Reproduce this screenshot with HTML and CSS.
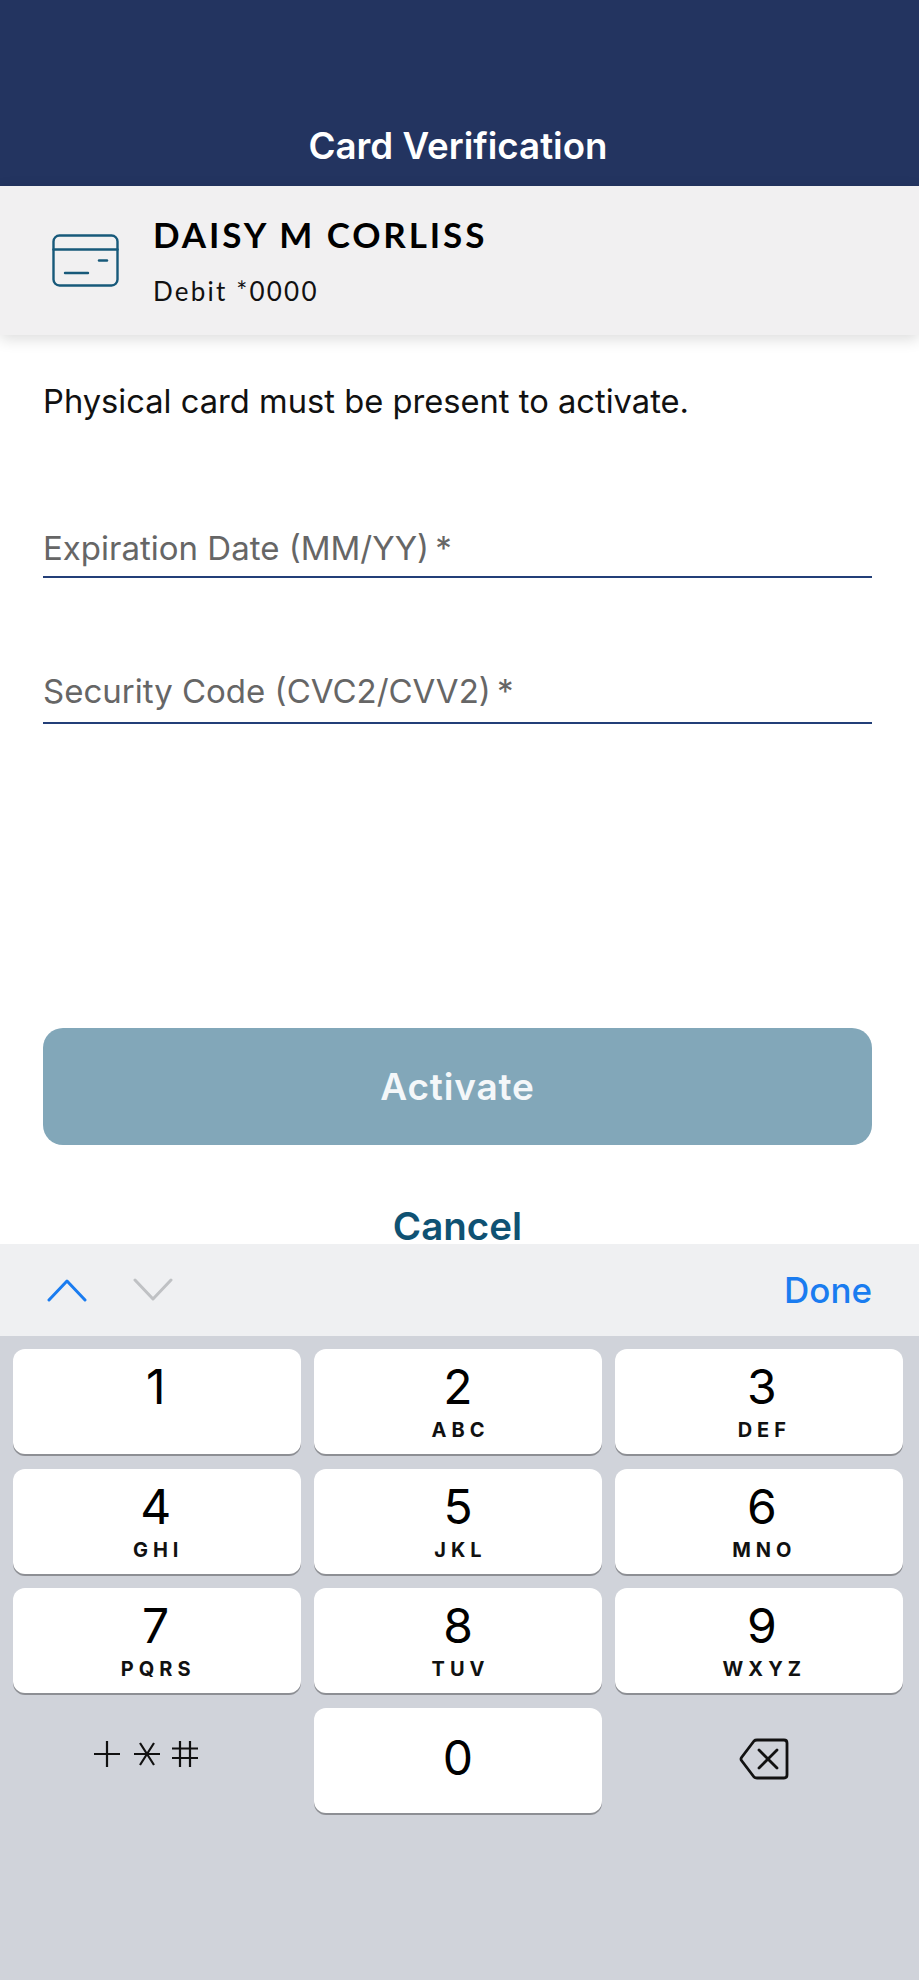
FILE: index.html
```html
<!DOCTYPE html>
<html lang="en">
  <head>
    <meta charset="UTF-8" />
    <meta name="viewport" content="width=device-width, initial-scale=1.0" />
    <title>Card Verification</title>
    <link rel="stylesheet" href="styles.css">
  </head>
  <body>
    <header class="nav-bar">
      <h1 class="nav-title">Card Verification</h1>
    </header>
    <section class="card-summary">
      <svg class="card-icon" viewBox="0 0 67 53" fill="none" stroke="#17597a" stroke-width="2.4" stroke-linecap="round">
        <rect x="1.5" y="1.5" width="64" height="50" rx="6" />
        <path d="M1.5 15.5H65.5" />
        <path d="M47 26.5H55" />
        <path d="M13 39H36" />
      </svg>
      <div class="card-text">
        <div class="card-name">DAISY M CORLISS</div>
        <div class="card-type">Debit *0000</div>
      </div>
    </section>
    <main class="form-area">
      <p class="notice">Physical card must be present to activate.</p>
      <div class="field field-date">Expiration Date (MM/YY) <span class="required">*</span></div>
      <div class="field field-code">Security Code (CVC2/CVV2) <span class="required">*</span></div>
      <button class="activate-button">Activate</button>
      <button class="cancel-button">Cancel</button>
    </main>
    <div class="key-toolbar">
      <div class="arrows">
        <svg class="arrow" viewBox="0 0 40 24" fill="none" stroke="#1a7cf0" stroke-width="3" stroke-linecap="round" stroke-linejoin="round">
          <path d="M2 22L20 3L38 22" />
        </svg>
        <svg class="arrow" viewBox="0 0 40 24" fill="none" stroke="#bfc1c4" stroke-width="3" stroke-linecap="round" stroke-linejoin="round">
          <path d="M2 2L20 21L38 2" />
        </svg>
      </div>
      <span class="done">Done</span>
    </div>
    <div class="keypad">
      <div class="key"><span class="digit">1</span></div>
      <div class="key"><span class="digit">2</span><span class="letters">ABC</span></div>
      <div class="key"><span class="digit">3</span><span class="letters">DEF</span></div>
      <div class="key"><span class="digit">4</span><span class="letters">GHI</span></div>
      <div class="key"><span class="digit">5</span><span class="letters">JKL</span></div>
      <div class="key"><span class="digit">6</span><span class="letters">MNO</span></div>
      <div class="key"><span class="digit">7</span><span class="letters">PQRS</span></div>
      <div class="key"><span class="digit">8</span><span class="letters">TUV</span></div>
      <div class="key"><span class="digit">9</span><span class="letters">WXYZ</span></div>
      <div class="key key-plain">
        <svg class="symbols" viewBox="0 0 106 28" fill="none" stroke="#111" stroke-width="2.2">
          <path d="M1 14H27M14 1V27" />
          <path d="M41 14H67M47 3L61 25M61 3L47 25" />
          <path d="M79 8.500H105M79 18H105M87 1V27M97 1V27" />
        </svg>
      </div>
      <div class="key key-zero"><span class="digit">0</span></div>
      <div class="key key-plain">
        <svg class="backspace" viewBox="0 0 50 42" fill="none" stroke="#111" stroke-width="2.8" stroke-linejoin="round" stroke-linecap="round">
          <path d="M18 2H45Q48 2 48 5V37Q48 40 45 40H18Q16 40 15 39L2.500 22.500Q1.500 21 2.500 19.500L15 3Q16 2 18 2Z" />
          <path d="M20 12L38 30M38 12L20 30" />
        </svg>
      </div>
    </div>
  </body>
</html>
```

FILE: styles.css
```css
body {
  display: flex;
  flex-direction: column;
  height: 1980px;
  margin: 0;
  overflow: hidden;
  font-family: Inter, "Liberation Sans", sans-serif;
  background-color: #fff;
}
.nav-bar {
  display: flex;
  align-items: flex-end;
  justify-content: center;
  height: 186px;
  background-color: #233460;
}
.nav-title {
  margin: 0 3px 17px 0;
  font-size: 36.7px;
  line-height: 46px;
  font-weight: 600;
  color: #fff;
}
/* Card strip under the nav bar */
.card-summary {
  position: relative;
  display: flex;
  align-items: center;
  height: 149px;
  padding-left: 52px;
  box-sizing: border-box;
  background-color: #f1f0f1;
  box-shadow: 0 4px 14px rgba(0, 0, 0, 0.14);
}
.card-icon {
  width: 67px;
  height: 53px;
  margin-right: 34px;
}
.card-text {
  display: flex;
  flex-direction: column;
}
.card-name {
  margin-top: -2px;
  font-family: Lato, sans-serif;
  font-size: 35px;
  line-height: 42px;
  font-weight: 700;
  letter-spacing: 2.9px;
  color: #000;
}
.card-type {
  margin-top: 21px;
  font-family: Lato, sans-serif;
  font-size: 26px;
  line-height: 30px;
  letter-spacing: 2.2px;
  color: #111;
}
/* Form */
.form-area {
  display: flex;
  flex-direction: column;
  height: 909px;
  padding: 0 47px 0 43px;
  box-sizing: border-box;
}
.form-area > * {
  flex-shrink: 0;
}
.notice {
  margin: 44px 0 0;
  font-size: 32.7px;
  line-height: 44px;
  color: #111;
}
.field {
  height: 50px;
  border-bottom: 2px solid #233f78;
  font-size: 33px;
  line-height: 44px;
  color: #666;
}
.required {
  margin-left: -3px;
}
.field-date {
  margin-top: 103px;
}
.field-code {
  margin-top: 94px;
  line-height: 38px;
}
.activate-button {
  height: 117px;
  margin-top: 304px;
  border: none;
  border-radius: 20px;
  background-color: #82a7b9;
  font-family: inherit;
  font-size: 37px;
  font-weight: 600;
  letter-spacing: 0.8px;
  color: #f4f7f9;
}
.cancel-button {
  margin-top: 64px;
  padding: 0;
  border: none;
  background: none;
  font-family: inherit;
  font-size: 38.5px;
  line-height: 34px;
  font-weight: 600;
  color: #0f5273;
}
/* Keyboard */
.key-toolbar {
  display: flex;
  align-items: center;
  justify-content: space-between;
  height: 92px;
  padding: 0 47px 0 47px;
  box-sizing: border-box;
  background-color: #eff0f2;
}
.arrows {
  display: flex;
  gap: 46px;
}
.arrow {
  width: 40px;
  height: 24px;
}
.done {
  font-size: 35px;
  font-weight: 500;
  color: #1a7cf0;
}
.keypad {
  flex: 1;
  display: grid;
  grid-template-columns: repeat(3, 1fr);
  grid-auto-rows: 105px;
  gap: 14.67px 12.500px;
  padding: 13px 16px 0 13px;
  background-color: #d0d3da;
}
.key {
  display: flex;
  flex-direction: column;
  align-items: center;
  border-radius: 12px;
  background-color: #fff;
  box-shadow: 0 2px 0 #8d8f94;
}
.key:nth-child(3n+1) {
  padding-right: 3px;
}
.key:nth-child(3n) {
  padding-left: 6px;
}
.key-plain {
  justify-content: center;
  padding-bottom: 8px;
  background: none;
  box-shadow: none;
}
.key-zero {
  justify-content: center;
  padding-bottom: 5px;
}
.digit {
  margin-top: 9px;
  font-size: 48px;
  line-height: 58px;
  color: #000;
}
.key-zero .digit {
  margin-top: 0;
}
.letters {
  margin-top: 3px;
  margin-right: -5px;
  font-size: 20px;
  line-height: 22px;
  font-weight: 700;
  letter-spacing: 5px;
  color: #111;
}
.symbols {
  width: 106px;
  height: 28px;
  margin-right: 20px;
  margin-bottom: 4px;
}
.backspace {
  width: 50px;
  height: 42px;
  margin-left: 5px;
  margin-top: 5px;
}
```
